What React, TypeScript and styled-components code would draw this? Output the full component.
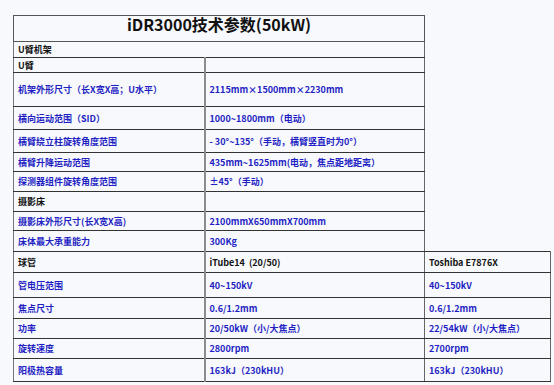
import styled, { createGlobalStyle } from 'styled-components'

const GlobalStyle = createGlobalStyle`
  html, body {
    margin: 0;
    background: #f7f9fc;
  }
  body {
    font-family: "Noto Sans CJK SC", "Noto Sans", sans-serif;
  }
`

const Page = styled.div`
  width: 554px;
  height: 385px;
  padding: 15px 0 0 13px;
  box-sizing: border-box;
  background: #f7f9fc;
`

const SpecTable = styled.table`
  border-collapse: collapse;
  table-layout: fixed;
  width: 537px;
`

const Col = styled.col<{ $w: number }>`
  width: ${(p) => p.$w}px;
`

const Row = styled.tr<{ $h: number }>`
  height: ${(p) => p.$h}px;
`

const TitleCell = styled.td`
  border: 1px solid #555;
  text-align: center;
  vertical-align: top;
  padding: 0;
  font-size: 16px;
  line-height: 17px;
  font-weight: 700;
  color: #111;
`

const Cell = styled.td<{ $tone?: 'blue' | 'dark'; $label?: boolean }>`
  border-top: 1px solid #333;
  border-bottom: 1px solid #333;
  border-left: 1px solid #777;
  border-right: ${(p) => (p.$label ? '2px solid #8c8c8c' : '1px solid #666')};
  padding: 0 4px;
  vertical-align: middle;
  font-size: 9px;
  line-height: 11px;
  font-weight: 700;
  white-space: pre;
  color: ${(p) => (p.$tone === 'dark' ? '#111' : '#1f1fc4')};
`

const Blank = styled.td`
  border: none;
  padding: 0;
`

type Spec = {
  label: string
  value?: string
  extra?: string
  h: number
  dark?: boolean
  span?: boolean
}

const specs: Spec[] = [
  { label: 'U臂机架', h: 16, dark: true, span: true },
  { label: 'U臂', value: '', h: 15, dark: true },
  { label: '机架外形尺寸（长X宽X高；U水平）', value: '2115mm×1500mm×2230mm', h: 34 },
  { label: '横向运动范围（SID）', value: '1000~1800mm（电动）', h: 23 },
  { label: '横臂绕立柱旋转角度范围', value: '- 30°~135°（手动，横臂竖直时为0°）', h: 23 },
  { label: '横臂升降运动范围', value: '435mm~1625mm(电动，焦点距地距离）', h: 19 },
  { label: '探测器组件旋转角度范围', value: '±45°（手动）', h: 20 },
  { label: '摄影床', value: '', h: 20, dark: true },
  { label: '摄影床外形尺寸(长X宽X高)', value: '2100mmX650mmX700mm', h: 19 },
  { label: '床体最大承重能力', value: '300Kg', h: 21 },
  { label: '球管', value: 'iTube14  (20/50)', extra: 'Toshiba E7876X', h: 21, dark: true },
  { label: '管电压范围', value: '40~150kV', extra: '40~150kV', h: 25 },
  { label: '焦点尺寸', value: '0.6/1.2mm', extra: '0.6/1.2mm', h: 21 },
  { label: '功率', value: '20/50kW（小/大焦点）', extra: '22/54kW（小/大焦点）', h: 20 },
  { label: '旋转速度', value: '2800rpm', extra: '2700rpm', h: 20 },
  { label: '阳极热容量', value: '163kJ（230kHU）', extra: '163kJ（230kHU）', h: 23 },
]

function SpecRow({ spec }: { spec: Spec }) {
  const tone = spec.dark ? 'dark' : 'blue'
  if (spec.span) {
    return (
      <Row $h={spec.h}>
        <Cell colSpan={2} $tone={tone}>
          {spec.label}
        </Cell>
        <Blank />
      </Row>
    )
  }
  return (
    <Row $h={spec.h}>
      <Cell $label $tone={tone}>
        {spec.label}
      </Cell>
      <Cell $tone={tone}>{spec.value}</Cell>
      {spec.extra !== undefined ? <Cell $tone={tone}>{spec.extra}</Cell> : <Blank />}
    </Row>
  )
}

export default function App() {
  return (
    <Page>
      <GlobalStyle />
      <SpecTable>
        <colgroup>
          <Col $w={191} />
          <Col $w={220} />
          <Col $w={126} />
        </colgroup>
        <tbody>
          <Row $h={26}>
            <TitleCell colSpan={2}>iDR3000技术参数(50kW)</TitleCell>
            <Blank />
          </Row>
          {specs.map((spec) => (
            <SpecRow key={spec.label} spec={spec} />
          ))}
        </tbody>
      </SpecTable>
    </Page>
  )
}
